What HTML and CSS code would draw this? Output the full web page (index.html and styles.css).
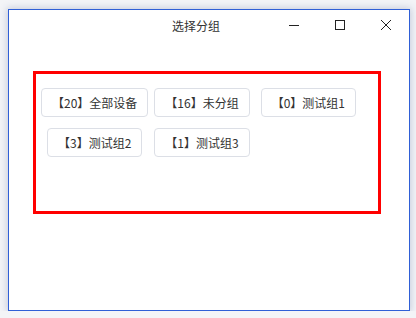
FILE: index.html
```html
<!DOCTYPE html>
<html lang="zh-CN">
<head>
  <meta charset="UTF-8">
  <meta name="viewport" content="width=device-width, initial-scale=1.0">
  <title>选择分组</title>
  <link rel="stylesheet" href="styles.css">
</head>
<body>
  <div class="window">
    <div class="titlebar">
      <span class="title">选择分组</span>
      <div class="controls">
        <span class="ctrl">
          <svg width="10" height="10" viewBox="0 0 10 10"><path d="M0 5.5h10" stroke="#222" stroke-width="1" fill="none"/></svg>
        </span>
        <span class="ctrl">
          <svg width="10" height="10" viewBox="0 0 10 10"><rect x="0.5" y="0.5" width="9" height="9" stroke="#222" stroke-width="1" fill="none"/></svg>
        </span>
        <span class="ctrl">
          <svg width="10" height="10" viewBox="0 0 10 10"><path d="M0 0L10 10M10 0L0 10" stroke="#222" stroke-width="1" fill="none"/></svg>
        </span>
      </div>
    </div>

    <div class="content">
      <div class="group-box">
        <div class="group-row">
          <button class="group-btn">【20】全部设备</button>
          <button class="group-btn tight">【16】未分组</button>
          <button class="group-btn">【0】测试组1</button>
        </div>
        <div class="group-row indent">
          <button class="group-btn">【3】测试组2</button>
          <button class="group-btn wide">【1】测试组3</button>
        </div>
      </div>
    </div>
  </div>
</body>
</html>
```

FILE: styles.css
```css
body {
  margin: 0;
  padding: 9px 6px 0 8px;
  background: #f3f4f7;
  font-family: "Noto Sans CJK SC", "Microsoft YaHei", sans-serif;
}
.window {
  width: 400px;
  height: 300px;
  background: #fff;
  border: 1px solid #2f5fd6;
  box-shadow: 0 0 7px 1px rgba(60, 80, 140, 0.25);
  display: flex;
  flex-direction: column;
}
.titlebar {
  height: 30px;
  display: flex;
  align-items: center;
}
.title {
  flex: 1;
  padding-left: 163px;
  font-size: 12px;
  color: #333;
}
.controls {
  display: flex;
  height: 30px;
}
.ctrl {
  width: 46px;
  display: flex;
  align-items: center;
  justify-content: center;
}
.content {
  padding: 31px 28px 0 24px;
}
.group-box {
  box-sizing: border-box;
  height: 143px;
  border: 3px solid #ff0000;
  padding: 14px 5px 0;
  display: flex;
  flex-direction: column;
  gap: 11px;
}
.group-row {
  display: flex;
}
.group-row.indent {
  padding-left: 6px;
}
.group-btn {
  height: 29px;
  padding: 0 10px;
  background: #fff;
  border: 1px solid #dcdfe6;
  border-radius: 4px;
  font-family: inherit;
  font-size: 12px;
  color: #333;
  line-height: 27px;
}
.group-btn + .group-btn {
  margin-left: 11px;
}
.group-btn.tight {
  margin-left: 6px;
}
.group-btn.wide {
  margin-left: 12px;
}
```
